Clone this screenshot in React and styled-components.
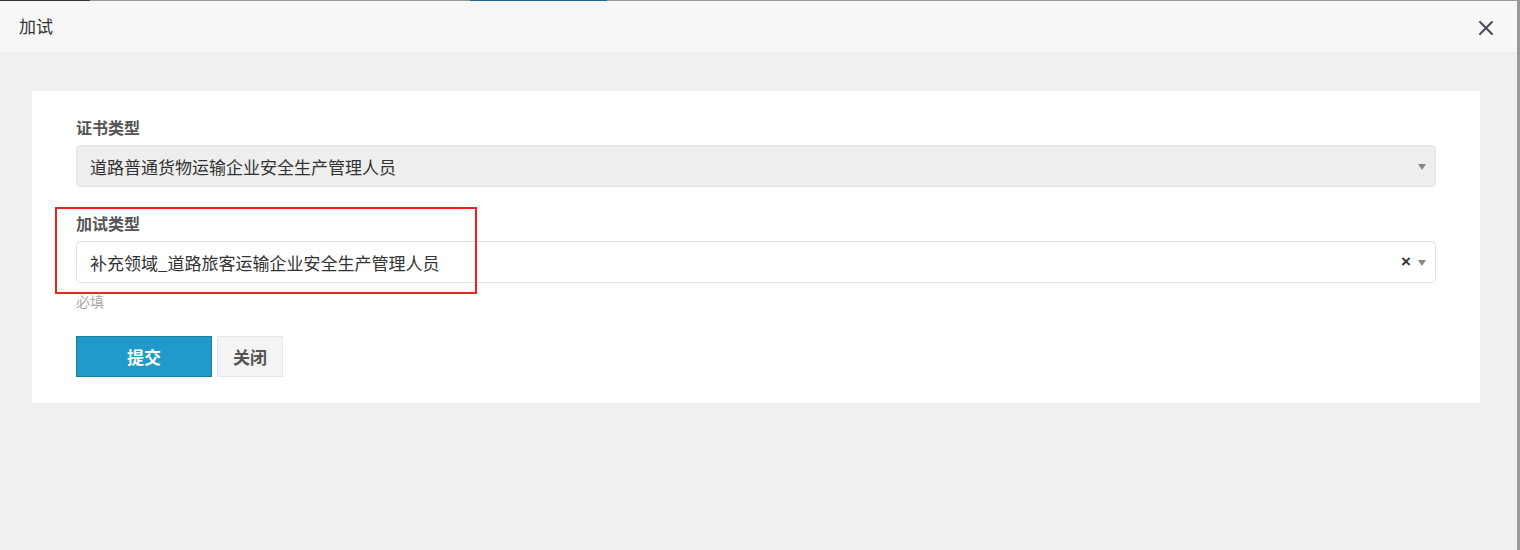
import React from 'react';
import styled, { createGlobalStyle } from 'styled-components';

const Global = createGlobalStyle`
  html, body { margin: 0; padding: 0; }
  body {
    font-family: "Noto Sans CJK SC", "Liberation Sans", sans-serif;
    background: #999;
  }
`;

const Page = styled.div`
  width: 1520px;
  height: 550px;
  display: flex;
  flex-direction: column;
  overflow: hidden;
`;

const TopStrip = styled.div`
  height: 1px;
  display: flex;
  flex: none;
`;

const Segment = styled.div`
  width: ${(p) => p.w};
  flex: ${(p) => (p.w ? 'none' : 1)};
  background: ${(p) => p.color};
`;

const Stage = styled.div`
  flex: 1;
  display: flex;
`;

const Modal = styled.div`
  width: 1517px;
  display: flex;
  flex-direction: column;
  background: #f0f0f0;
`;

const SideStrip = styled.div`
  flex: 1;
  background: #9a9a9a;
`;

const Header = styled.div`
  height: 51px;
  flex: none;
  display: flex;
  align-items: center;
  justify-content: space-between;
  padding: 0 19px;
  background: #f7f7f7;
  border-bottom: 1px solid #ebebeb;
`;

const Title = styled.div`
  font-size: 17px;
  color: #333;
  margin-top: -2px;
`;

const CloseBtn = styled.button`
  border: none;
  background: none;
  padding: 0;
  width: 20px;
  height: 20px;
  display: flex;
  align-items: center;
  justify-content: center;
  cursor: pointer;
  margin-right: 2px;
  margin-top: 3px;
`;

const Body = styled.div`
  flex: 1;
  padding: 38px 37px 0 32px;
`;

const Card = styled.div`
  position: relative;
  background: #fff;
  padding: 25px 44px 26px;
`;

const Field = styled.div`
  & + & {
    margin-top: 25px;
  }
`;

const Label = styled.div`
  font-size: 16px;
  font-weight: bold;
  color: #555;
  line-height: 22px;
  margin-bottom: 7px;
`;

const Select = styled.div`
  height: 40px;
  display: flex;
  align-items: center;
  padding: 0 9px 0 13px;
  border: 1px solid ${(p) => (p.disabled ? '#e3e3e3' : '#e2e2e2')};
  border-radius: 4px;
  background: ${(p) => (p.disabled ? '#eee' : '#fff')};
`;

const Value = styled.div`
  flex: 1;
  font-size: 17px;
  color: #333;
`;

const Clear = styled.span`
  font-size: 17px;
  font-weight: bold;
  color: #333;
  margin-right: 7px;
  font-family: "Liberation Sans", sans-serif;
`;

const Caret = styled.span`
  width: 0;
  height: 0;
  border-left: 4px solid transparent;
  border-right: 4px solid transparent;
  border-top: 6px solid #888;
  margin-top: 2px;
`;

const Help = styled.div`
  margin-top: 8px;
  font-size: 14px;
  line-height: 20px;
  color: #aaa;
`;

const Actions = styled.div`
  display: flex;
  gap: 5px;
  margin-top: 25px;
`;

const Button = styled.button`
  height: 41px;
  width: ${(p) => p.width};
  font-family: inherit;
  font-size: 17px;
  font-weight: bold;
  border-radius: 0;
  cursor: pointer;
  color: ${(p) => (p.primary ? '#fff' : '#555')};
  background: ${(p) => (p.primary ? '#1f9acb' : '#f4f4f4')};
  border: 1px solid ${(p) => (p.primary ? '#17849a' : '#e5e5e5')};
`;

const Highlight = styled.div`
  position: absolute;
  left: 23px;
  top: 116px;
  width: 418px;
  height: 83px;
  border: 2px solid #ee2222;
  pointer-events: none;
`;

export default function App() {
  return (
    <>
      <Global />
      <Page>
        <TopStrip>
          <Segment w="90px" color="#333" />
          <Segment w="380px" color="#999" />
          <Segment w="137px" color="#1a6a8a" />
          <Segment color="#999" />
        </TopStrip>
        <Stage>
          <Modal>
            <Header>
              <Title>加试</Title>
              <CloseBtn aria-label="close">
                <svg width="16" height="16" viewBox="0 0 16 16">
                  <path d="M2 2L14 14M14 2L2 14" stroke="#4a4a55" strokeWidth="2" strokeLinecap="round" />
                </svg>
              </CloseBtn>
            </Header>
            <Body>
              <Card>
                <Field>
                  <Label>证书类型</Label>
                  <Select disabled>
                    <Value>道路普通货物运输企业安全生产管理人员</Value>
                    <Caret />
                  </Select>
                </Field>
                <Field>
                  <Label>加试类型</Label>
                  <Select>
                    <Value>补充领域_道路旅客运输企业安全生产管理人员</Value>
                    <Clear>×</Clear>
                    <Caret />
                  </Select>
                  <Help>必填</Help>
                </Field>
                <Actions>
                  <Button primary width="136px">提交</Button>
                  <Button width="66px">关闭</Button>
                </Actions>
                <Highlight />
              </Card>
            </Body>
          </Modal>
          <SideStrip />
        </Stage>
      </Page>
    </>
  );
}
